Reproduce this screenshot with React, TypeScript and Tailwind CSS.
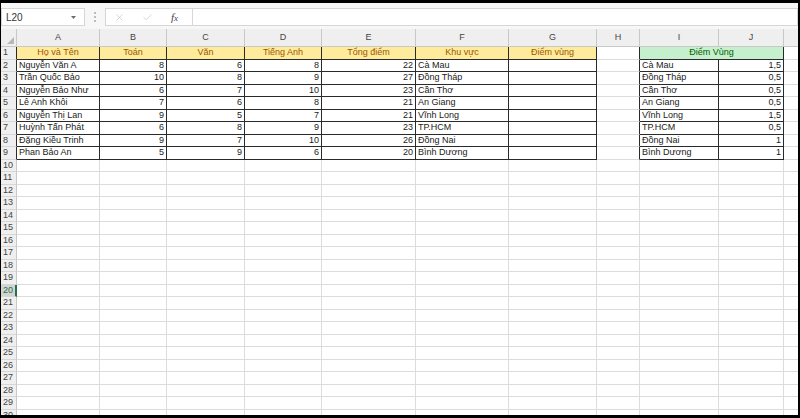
import React from 'react';
import { X, Check } from 'lucide-react';

type Col = { key: string; w: string };
const COLS: Col[] = [
  { key: 'A', w: 'w-[83px]' },
  { key: 'B', w: 'w-[67px]' },
  { key: 'C', w: 'w-[78px]' },
  { key: 'D', w: 'w-[77px]' },
  { key: 'E', w: 'w-[94px]' },
  { key: 'F', w: 'w-[93px]' },
  { key: 'G', w: 'w-[88px]' },
  { key: 'H', w: 'w-[43px]' },
  { key: 'I', w: 'w-[79px]' },
  { key: 'J', w: 'w-[65px]' },
];

const HEAD = ['Họ và Tên', 'Toán', 'Văn', 'Tiếng Anh', 'Tổng điểm', 'Khu vực', 'Điểm vùng'];

const DATA: (string | number)[][] = [
  ['Nguyễn Văn A', 8, 6, 8, 22, 'Cà Mau'],
  ['Trần Quốc Bảo', 10, 8, 9, 27, 'Đồng Tháp'],
  ['Nguyễn Bảo Như', 6, 7, 10, 23, 'Cần Thơ'],
  ['Lê Anh Khôi', 7, 6, 8, 21, 'An Giang'],
  ['Nguyễn Thị Lan', 9, 5, 7, 21, 'Vĩnh Long'],
  ['Huỳnh Tấn Phát', 6, 8, 9, 23, 'TP.HCM'],
  ['Đặng Kiều Trinh', 9, 7, 10, 26, 'Đồng Nai'],
  ['Phan Bảo An', 5, 9, 6, 20, 'Bình Dương'],
];

const REGIONS: [string, string][] = [
  ['Cà Mau', '1,5'],
  ['Đồng Tháp', '0,5'],
  ['Cần Thơ', '0,5'],
  ['An Giang', '0,5'],
  ['Vĩnh Long', '1,5'],
  ['TP.HCM', '0,5'],
  ['Đồng Nai', '1'],
  ['Bình Dương', '1'],
];

const DARK = 'border-r-[#2a2a2a]';
const DARKB = 'border-b-[#2a2a2a]';
const GRID = 'border-r-[#dcdcdc]';
const GRIDB = 'border-b-[#dcdcdc]';

function Cell({
  w,
  right,
  bottom,
  className = '',
  children,
}: {
  w: string;
  right: string;
  bottom: string;
  className?: string;
  children?: React.ReactNode;
}) {
  return (
    <div
      className={`${w} shrink-0 h-full flex items-center border-r border-b ${right} ${bottom} overflow-hidden whitespace-nowrap ${className}`}
    >
      {children}
    </div>
  );
}

function Row({ r }: { r: number }) {
  const inBox = r >= 1 && r <= 9;
  const selected = r === 20;
  const cells: React.ReactNode[] = [];

  COLS.forEach((c, i) => {
    const key = c.key;
    // Skip J in row 1 (merged with I)
    if (r === 1 && key === 'J') return;

    let right = GRID;
    let bottom = GRIDB;
    let cls = '';
    let content: React.ReactNode = null;
    let w = c.w;

    const isAG = i <= 6;
    const isIJ = key === 'I' || key === 'J';

    if (inBox && (isAG || isIJ)) {
      right = DARK;
      bottom = DARKB;
    }
    if (inBox && key === 'H') {
      right = DARK;
    }

    if (r === 1 && isAG) {
      cls = 'justify-center bg-[#ffeb9c] text-[#9c5700]';
      content = HEAD[i];
    } else if (r === 1 && key === 'I') {
      w = 'w-[144px]';
      cls = 'justify-center bg-[#c6efce] text-[#006100]';
      content = 'Điểm Vùng';
    } else if (r >= 2 && r <= 9) {
      const d = DATA[r - 2];
      const reg = REGIONS[r - 2];
      if (key === 'A' || key === 'F') {
        cls = 'justify-start pl-[2px]';
        content = d[key === 'A' ? 0 : 5];
      } else if (i >= 1 && i <= 4) {
        cls = 'justify-end pr-[2px]';
        content = d[i];
      } else if (key === 'I') {
        cls = 'justify-start pl-[2px]';
        content = reg[0];
      } else if (key === 'J') {
        cls = 'justify-end pr-[2px]';
        content = reg[1];
      }
    }

    cells.push(
      <Cell key={key} w={w} right={right} bottom={bottom} className={cls}>
        {content}
      </Cell>
    );
  });

  return (
    <div className="flex h-[12.5px] shrink-0">
      <div
        className={`w-[16px] shrink-0 h-full flex items-center pl-[2px] border-b border-b-[#d6d6d6] text-[#444] ${
          selected
            ? 'bg-[#d3d3d3] text-[#217346] border-r-2 border-r-[#217346]'
            : inBox
            ? 'bg-[#efefef] border-r border-r-[#2a2a2a]'
            : 'bg-[#efefef] border-r border-r-[#c8c8c8]'
        }`}
      >
        {r}
      </div>
      {cells}
      <div className="flex-1 h-full border-b border-b-[#dcdcdc]" />
    </div>
  );
}

export default function App() {
  const rows = Array.from({ length: 30 }, (_, i) => i + 1);
  return (
    <div className="w-[800px] h-[418px] bg-black pt-[3px] pl-[1px] pr-[2px] pb-[3px] overflow-hidden font-['Liberation_Sans',Arial,sans-serif] text-[9px] text-[#1a1a1a]">
      <div className="w-full h-full bg-white flex flex-col overflow-hidden">
        {/* Formula bar */}
        <div className="h-[26px] shrink-0 flex items-center bg-[#f7f7f7] pt-[2px]">
          <div className="w-[84px] h-[18px] bg-white border border-[#d6d6d6] flex items-center justify-between pl-[4px] pr-[8px] text-[10px] text-[#333]">
            <span>L20</span>
            <svg width="5" height="3" viewBox="0 0 5 3">
              <path d="M0 0 L5 0 L2.5 3 Z" fill="#6b6b6b" />
            </svg>
          </div>
          <div className="w-[20px] flex flex-col items-center justify-center gap-[2px]">
            <span className="w-[2px] h-[2px] rounded-full bg-[#a8a8a8]" />
            <span className="w-[2px] h-[2px] rounded-full bg-[#a8a8a8]" />
            <span className="w-[2px] h-[2px] rounded-full bg-[#a8a8a8]" />
          </div>
          <div className="w-[88px] h-[18px] bg-white border border-[#d6d6d6] flex items-center pl-[8px]">
            <X size={11} strokeWidth={1.2} color="#b5b5b5" />
            <div className="w-[17px]" />
            <Check size={11} strokeWidth={1.2} color="#b5b5b5" />
            <div className="w-[18px]" />
            <span className="font-['Liberation_Serif',serif] italic text-[11px] text-[#444]">
              f<span className="text-[9px]">x</span>
            </span>
          </div>
          <div className="flex-1 h-[18px] bg-white border border-l-0 border-[#d6d6d6]" />
        </div>

        {/* Column headers */}
        <div className="flex h-[18px] shrink-0 bg-[#efefef] text-[#444]">
          <div className="w-[16px] shrink-0 h-full relative border-r border-b border-[#c8c8c8]">
            <svg className="absolute right-[2px] bottom-[2px]" width="7" height="7" viewBox="0 0 7 7">
              <path d="M7 0 L7 7 L0 7 Z" fill="#b8b8b8" />
            </svg>
          </div>
          {COLS.map((c) => (
            <div
              key={c.key}
              className={`${c.w} shrink-0 h-full flex items-center justify-center border-r border-b border-[#c8c8c8]`}
            >
              {c.key}
            </div>
          ))}
          <div className="flex-1 h-full border-b border-[#c8c8c8]" />
        </div>

        {/* Rows */}
        <div className="flex flex-col">
          {rows.map((r) => (
            <Row key={r} r={r} />
          ))}
        </div>
      </div>
    </div>
  );
}
